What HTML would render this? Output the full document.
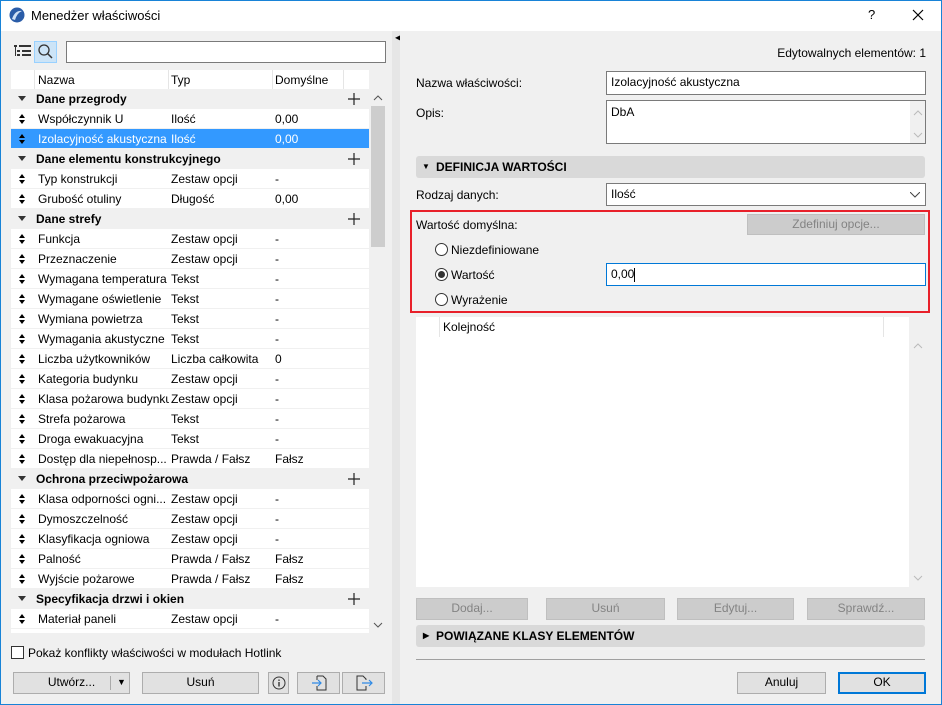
<!DOCTYPE html>
<html><head><meta charset="utf-8"><style>
*{box-sizing:border-box;margin:0;padding:0}
body{width:942px;height:705px;overflow:hidden;background:#f0f0f0;font-family:"Liberation Sans",sans-serif;font-size:12px;color:#000;position:relative}
.a{position:absolute}
.win{left:0;top:0;width:942px;height:705px;border:1px solid #1883d7}
.title{left:1px;top:1px;width:940px;height:30px;background:#fff}
.row{position:absolute;left:11px;width:358px;height:20px;background:#fff;border-bottom:1px solid #f0f0f0;line-height:20px}
.grp{background:#f0f0f0;font-weight:bold}
.btn{position:absolute;background:#e1e1e1;border:1px solid #adadad;text-align:center;line-height:19px;height:22px}
.dis{background:#cccccc;border-color:#bfbfbf;color:#838383}
.inp{position:absolute;background:#fff;border:1px solid #7a7a7a;padding-left:4px;line-height:20px}
.sec{position:absolute;left:416px;width:509px;height:22px;background:#d9d9d9;border-radius:3px;font-weight:bold;line-height:22px;padding-left:20px}
.radio{position:absolute;width:13px;height:13px;border:1px solid #333;border-radius:50%;background:#fff}
</style></head><body>
<div class="a win"></div>
<div class="a title"></div>
<svg class="a" style="left:9px;top:7px" width="16" height="16"><circle cx="8" cy="8" r="7.5" fill="#2a5ca8"/><path d="M3 12 Q6 3 13 4 Q8 6 6 13Z" fill="#cfe0f5"/></svg>
<div class="a" style="left:31px;top:8px;font-size:13px">Menedżer właściwości</div>
<div class="a" style="left:868px;top:7px;font-size:13px">?</div>
<svg class="a" style="left:912px;top:9px" width="12" height="12"><path d="M1 1L11 11M11 1L1 11" stroke="#000" stroke-width="1.2"/></svg>

<svg class="a" style="left:14px;top:44px" width="18" height="14"><g fill="#333"><rect x="0" y="1" width="3" height="2"/><rect x="5" y="1" width="12" height="2"/><rect x="3" y="6" width="3" height="2"/><rect x="8" y="6" width="9" height="2"/><rect x="3" y="10" width="3" height="2"/><rect x="8" y="10" width="9" height="2"/><rect x="1" y="3" width="1" height="9"/></g></svg>
<div class="a" style="left:34px;top:41px;width:23px;height:22px;background:#cce4f7;border:1px solid #99d1ff"></div>
<svg class="a" style="left:37px;top:43px" width="18" height="18"><circle cx="7" cy="7" r="5" fill="none" stroke="#333" stroke-width="1.3"/><path d="M10.5 10.5L15 15" stroke="#333" stroke-width="1.5"/></svg>
<div class="inp" style="left:66px;top:41px;width:320px;height:22px"></div>

<div class="a" style="left:11px;top:70px;width:358px;height:19px;background:#fff"></div>
<div class="a" style="left:34px;top:70px;width:1px;height:19px;background:#e5e5e5"></div>
<div class="a" style="left:168px;top:70px;width:1px;height:19px;background:#e5e5e5"></div>
<div class="a" style="left:272px;top:70px;width:1px;height:19px;background:#e5e5e5"></div>
<div class="a" style="left:343px;top:70px;width:1px;height:19px;background:#e5e5e5"></div>
<div class="a" style="left:38px;top:73px">Nazwa</div>
<div class="a" style="left:171px;top:73px">Typ</div>
<div class="a" style="left:275px;top:73px">Domyślne</div>
<div class="a" style="left:11px;top:89px;width:358px;height:544px;background:#fff"></div>
<div id="rows"></div>
<div class="a" style="left:370px;top:89px;width:16px;height:544px;background:#f0f0f0"></div>
<div class="a" style="left:371px;top:106px;width:14px;height:141px;background:#cdcdcd"></div>
<svg class="a" style="left:373px;top:95px" width="10" height="6"><path d="M1 5l4-4 4 4" fill="none" stroke="#555"/></svg>
<svg class="a" style="left:373px;top:622px" width="10" height="6"><path d="M1 1l4 4 4-4" fill="none" stroke="#555"/></svg>

<div class="a" style="left:11px;top:646px;width:13px;height:13px;border:1px solid #333;background:#fff"></div>
<div class="a" style="left:28px;top:646px">Pokaż konflikty właściwości w modułach Hotlink</div>
<div class="btn" style="left:13px;top:672px;width:117px">Utwórz...<span style="position:absolute;left:96px;top:3px;width:1px;height:14px;background:#aaa"></span><span style="position:absolute;left:103px;top:0;font-size:9px">&#9660;</span></div>
<div class="btn" style="left:142px;top:672px;width:117px">Usuń</div>
<div class="btn" style="left:268px;top:672px;width:21px"><svg width="14" height="14" style="margin-top:3px"><circle cx="7" cy="7" r="6" fill="none" stroke="#333"/><rect x="6.3" y="6" width="1.4" height="4.5" fill="#333"/><rect x="6.3" y="3.5" width="1.4" height="1.4" fill="#333"/></svg></div>
<div class="btn" style="left:297px;top:672px;width:43px"><svg width="20" height="18" style="margin-top:1px"><path d="M8 2h6l3 3v11H8v-4M8 6V2" fill="none" stroke="#333"/><path d="M3 9h9M9 6l3 3-3 3" fill="none" stroke="#2f8ae5" stroke-width="1.2"/></svg></div>
<div class="btn" style="left:342px;top:672px;width:43px"><svg width="20" height="18" style="margin-top:1px"><path d="M12 6V5l-3-3H3v14h9v-4" fill="none" stroke="#333"/><path d="M8 9h10M15 6l3 3-3 3" fill="none" stroke="#2f8ae5" stroke-width="1.2"/></svg></div>

<div class="a" style="left:392px;top:31px;width:8px;height:673px;background:#e6e6e6"></div>
<div class="a" style="left:395px;top:33px;font-size:8px">&#9664;</div>
<div class="a" style="left:400px;top:31px;width:541px;height:673px;background:#f0f0f0"></div>

<div class="a" style="left:700px;top:46px;width:226px;text-align:right">Edytowalnych elementów: 1</div>
<div class="a" style="left:416px;top:76px">Nazwa właściwości:</div>
<div class="inp" style="left:606px;top:71px;width:320px;height:24px">Izolacyjność akustyczna</div>
<div class="a" style="left:416px;top:106px">Opis:</div>
<div class="inp" style="left:606px;top:100px;width:320px;height:44px;line-height:22px">DbA</div>
<div class="a" style="left:910px;top:101px;width:15px;height:42px;background:#f0f0f0"></div>
<svg class="a" style="left:913px;top:110px" width="10" height="6"><path d="M1 5l4-4 4 4" fill="none" stroke="#bbb"/></svg>
<svg class="a" style="left:913px;top:132px" width="10" height="6"><path d="M1 1l4 4 4-4" fill="none" stroke="#bbb"/></svg>
<div class="sec" style="top:156px"><span style="position:absolute;left:6px;font-size:8px">&#9660;</span>DEFINICJA WARTOŚCI</div>
<div class="a" style="left:416px;top:188px">Rodzaj danych:</div>
<div class="inp" style="left:606px;top:183px;width:320px;height:23px">Ilość<svg style="position:absolute;right:5px;top:8px" width="10" height="6"><path d="M0 0l5 5 5-5" fill="none" stroke="#444"/></svg></div>
<div class="a" style="left:410px;top:210px;width:520px;height:103px;border:2px solid #e8202a"></div>
<div class="a" style="left:416px;top:218px">Wartość domyślna:</div>
<div class="btn dis" style="left:747px;top:214px;width:178px;height:21px;line-height:18px">Zdefiniuj opcje...</div>
<div class="radio" style="left:435px;top:243px"></div><div class="a" style="left:451px;top:243px">Niezdefiniowane</div>
<div class="radio" style="left:435px;top:268px"><div style="width:7px;height:7px;border-radius:50%;background:#333;margin:2px"></div></div><div class="a" style="left:451px;top:268px">Wartość</div>
<div class="inp" style="left:606px;top:263px;width:320px;height:23px;border-color:#0078d7">0,00<span style="display:inline-block;width:1px;height:14px;background:#000;vertical-align:middle"></span></div>
<div class="radio" style="left:435px;top:293px"></div><div class="a" style="left:451px;top:293px">Wyrażenie</div>

<div class="a" style="left:416px;top:317px;width:493px;height:270px;background:#fff"></div>
<div class="a" style="left:439px;top:317px;width:1px;height:20px;background:#e5e5e5"></div>
<div class="a" style="left:883px;top:317px;width:1px;height:20px;background:#e5e5e5"></div>
<div class="a" style="left:443px;top:320px">Kolejność</div>
<div class="a" style="left:910px;top:317px;width:16px;height:270px;background:#f0f0f0"></div>
<svg class="a" style="left:913px;top:343px" width="10" height="6"><path d="M1 5l4-4 4 4" fill="none" stroke="#bbb"/></svg>
<svg class="a" style="left:913px;top:575px" width="10" height="6"><path d="M1 1l4 4 4-4" fill="none" stroke="#bbb"/></svg>

<div class="btn dis" style="left:416px;top:598px;width:112px">Dodaj...</div>
<div class="btn dis" style="left:546px;top:598px;width:119px">Usuń</div>
<div class="btn dis" style="left:677px;top:598px;width:117px">Edytuj...</div>
<div class="btn dis" style="left:807px;top:598px;width:118px">Sprawdź...</div>
<div class="sec" style="top:625px"><span style="position:absolute;left:7px;font-size:8px">&#9654;</span>POWIĄZANE KLASY ELEMENTÓW</div>
<div class="a" style="left:416px;top:659px;width:509px;height:1px;background:#a0a0a0"></div>
<div class="btn" style="left:737px;top:672px;width:89px">Anuluj</div>
<div class="btn" style="left:838px;top:672px;width:88px;border:2px solid #0078d7;line-height:17px">OK</div>

<script>
var d=[["g","Dane przegrody"],["Współczynnik U","Ilość","0,00"],["s","Izolacyjność akustyczna","Ilość","0,00"],["g","Dane elementu konstrukcyjnego"],["Typ konstrukcji","Zestaw opcji","-"],["Grubość otuliny","Długość","0,00"],["g","Dane strefy"],["Funkcja","Zestaw opcji","-"],["Przeznaczenie","Zestaw opcji","-"],["Wymagana temperatura","Tekst","-"],["Wymagane oświetlenie","Tekst","-"],["Wymiana powietrza","Tekst","-"],["Wymagania akustyczne","Tekst","-"],["Liczba użytkowników","Liczba całkowita","0"],["Kategoria budynku","Zestaw opcji","-"],["Klasa pożarowa budynku","Zestaw opcji","-"],["Strefa pożarowa","Tekst","-"],["Droga ewakuacyjna","Tekst","-"],["Dostęp dla niepełnosp...","Prawda / Fałsz","Fałsz"],["g","Ochrona przeciwpożarowa"],["Klasa odporności ogni...","Zestaw opcji","-"],["Dymoszczelność","Zestaw opcji","-"],["Klasyfikacja ogniowa","Zestaw opcji","-"],["Palność","Prawda / Fałsz","Fałsz"],["Wyjście pożarowe","Prawda / Fałsz","Fałsz"],["g","Specyfikacja drzwi i okien"],["Materiał paneli","Zestaw opcji","-"]];
var h="";d.forEach(function(r,i){var t=89+20*i;
if(r[0]=="g"){h+='<div class="row grp" style="top:'+t+'px"><svg style="position:absolute;left:7px;top:7px" width="8" height="5"><path d="M0 0h8L4 5z" fill="#333"/></svg><span style="position:absolute;left:25px">'+r[1]+'</span><svg style="position:absolute;left:337px;top:4px" width="12" height="12"><path d="M6 0v12M0 6h12" stroke="#222" stroke-width="1.2"/></svg></div>';return;}
var s=r[0]=="s";if(s)r=r.slice(1);
h+='<div class="row" style="top:'+t+'px;'+(s?'background:#3399ff;color:#fff;':'')+'"><svg style="position:absolute;left:8px;top:5px" width="6" height="10"><path d="M0 4h6L3 0zM0 6h6L3 10z" fill="#000"/></svg><span style="position:absolute;left:27px;white-space:nowrap;width:131px;overflow:hidden">'+r[0]+'</span><span style="position:absolute;left:160px;white-space:nowrap">'+r[1]+'</span><span style="position:absolute;left:264px">'+r[2]+'</span></div>';});
document.getElementById("rows").innerHTML=h;
</script>
</body></html>
